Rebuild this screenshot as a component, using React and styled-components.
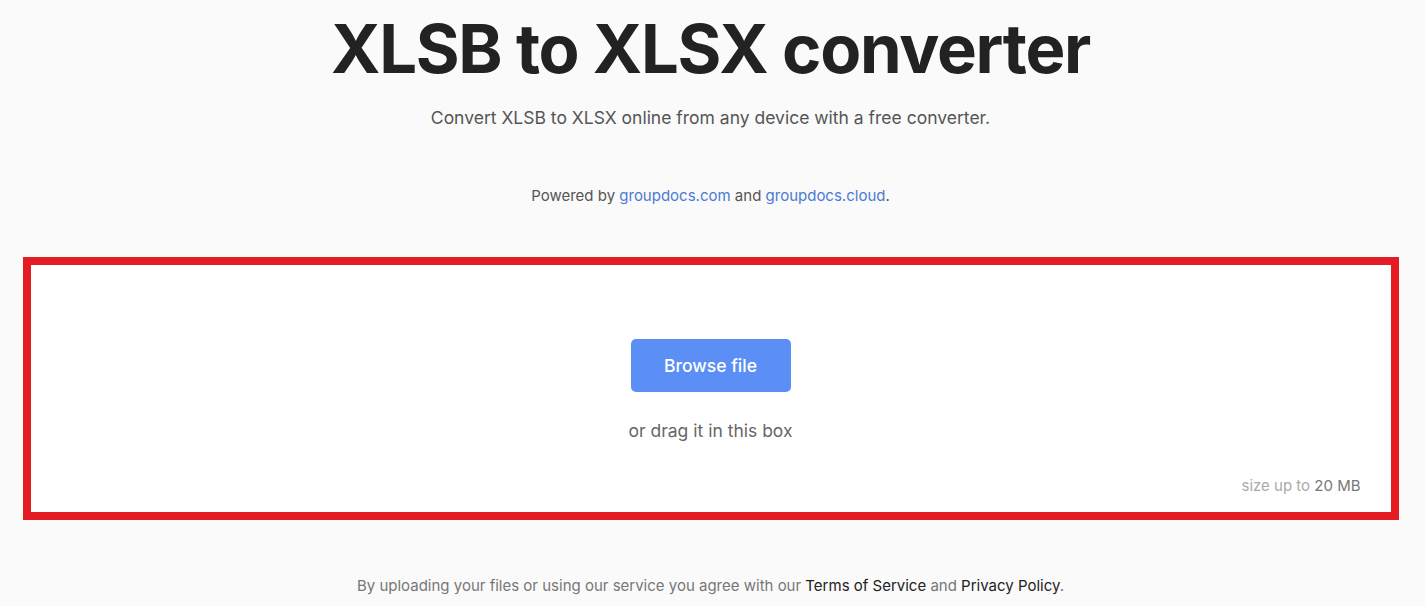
import React from "react";
import styled, { createGlobalStyle } from "styled-components";

const GlobalStyle = createGlobalStyle`
  html, body {
    margin: 0;
    padding: 0;
    background: #fafafa;
    font-family: Inter, "Noto Sans", sans-serif;
  }
`;

function App() {
  return (
    <Page>
      <GlobalStyle />
      <Header>
        <Title>XLSB to XLSX converter</Title>
        <Subtitle>Convert XLSB to XLSX online from any device with a free converter.</Subtitle>
        <Powered>
          Powered by <Link href="#">groupdocs.com</Link> and{" "}
          <Link href="#">groupdocs.cloud</Link>.
        </Powered>
      </Header>
      <DropBox>
        <BrowseButton>Browse file</BrowseButton>
        <DragHint>or drag it in this box</DragHint>
        <SizeNote>
          size up to <strong>20 MB</strong>
        </SizeNote>
      </DropBox>
      <Footer>
        By uploading your files or using our service you agree with our{" "}
        <FooterLink href="#">Terms of Service</FooterLink> and{" "}
        <FooterLink href="#">Privacy Policy</FooterLink>.
      </Footer>
    </Page>
  );
}

export default App;

const Page = styled.div`
  width: 1421px;
  height: 606px;
  overflow: hidden;
  display: flex;
  flex-direction: column;
  align-items: center;
`;

const Header = styled.div`
  display: flex;
  flex-direction: column;
  align-items: center;
`;

const Title = styled.h1`
  margin: 9px 0 0;
  font-size: 67px;
  line-height: 80px;
  font-weight: 700;
  letter-spacing: -1.3px;
  color: #222;
`;

const Subtitle = styled.p`
  margin: 17px 0 0;
  font-size: 17.5px;
  line-height: 24px;
  color: #555;
`;

const Powered = styled.p`
  margin: 56px 0 0;
  font-size: 15px;
  line-height: 20px;
  color: #555;
`;

const Link = styled.a`
  color: #4b7bd3;
  text-decoration: none;
`;

const DropBox = styled.div`
  box-sizing: border-box;
  margin-top: 51px;
  width: 1376px;
  height: 263px;
  border: 8px solid #e41b23;
  background: #fff;
  display: flex;
  flex-direction: column;
  align-items: center;
  padding-top: 74px;
  position: relative;
`;

const BrowseButton = styled.button`
  width: 160px;
  height: 53px;
  border: none;
  border-radius: 5px;
  background: #5b8ff6;
  color: #fff;
  font-family: inherit;
  font-size: 17.5px;
  font-weight: 500;
`;

const DragHint = styled.p`
  margin: 27px 0 0;
  font-size: 17.5px;
  line-height: 24px;
  color: #666;
`;

const SizeNote = styled.div`
  position: absolute;
  right: 30px;
  bottom: 17px;
  font-size: 15px;
  color: #aaa;

  strong {
    font-weight: 400;
    color: #777;
  }
`;

const Footer = styled.p`
  margin: 56px 0 0;
  font-size: 15px;
  line-height: 20px;
  color: #777;
`;

const FooterLink = styled.a`
  color: #222;
  text-decoration: none;
`;
